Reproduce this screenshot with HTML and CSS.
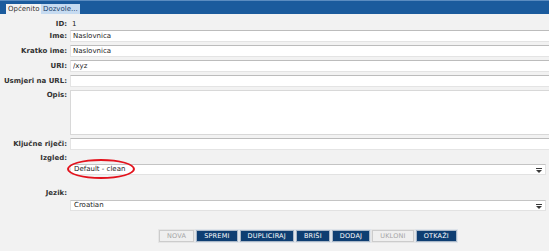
FILE: index.html
```html
<!DOCTYPE html>
<html lang="hr">
<head>
    <meta charset="UTF-8">
    <title>Stranica</title>
    <link rel="stylesheet" href="styles.css">
</head>
<body>
    <div class="tabbar">
        <div class="tab active">Općenito</div>
        <div class="tab">Dozvole...</div>
    </div>

    <div class="form">
        <div class="row row-id">
            <label>ID:</label>
            <span class="value">1</span>
        </div>
        <div class="row">
            <label>Ime:</label>
            <input type="text" value="Naslovnica">
        </div>
        <div class="row">
            <label>Kratko ime:</label>
            <input type="text" value="Naslovnica">
        </div>
        <div class="row">
            <label>URI:</label>
            <input type="text" value="/xyz">
        </div>
        <div class="row">
            <label>Usmjeri na URL:</label>
            <input type="text" value="">
        </div>
        <div class="row row-opis">
            <label>Opis:</label>
            <textarea></textarea>
        </div>
        <div class="row">
            <label>Ključne riječi:</label>
            <input type="text" value="">
        </div>

        <div class="row row-head">
            <label>Izgled:</label>
        </div>
        <div class="row row-select">
            <span></span>
            <div class="select marked">
                <span>Default - clean</span>
                <svg class="arrow" width="6" height="5" viewBox="0 0 6 5"><rect x="0" y="0" width="6" height="1" fill="#3a3a3a"/><path d="M0 2h6L3 5z" fill="#3a3a3a"/></svg>
                <div class="ring"></div>
            </div>
        </div>

        <div class="row row-head row-jezik">
            <label>Jezik:</label>
        </div>
        <div class="row row-select">
            <span></span>
            <div class="select">
                <span>Croatian</span>
                <svg class="arrow" width="6" height="5" viewBox="0 0 6 5"><rect x="0" y="0" width="6" height="1" fill="#3a3a3a"/><path d="M0 2h6L3 5z" fill="#3a3a3a"/></svg>
            </div>
        </div>

        <div class="row row-buttons">
            <span></span>
            <div class="buttons">
                <button class="btn" disabled>NOVA</button>
                <button class="btn">SPREMI</button>
                <button class="btn">DUPLICIRAJ</button>
                <button class="btn">BRIŠI</button>
                <button class="btn">DODAJ</button>
                <button class="btn" disabled>UKLONI</button>
                <button class="btn">OTKAŽI</button>
            </div>
        </div>
    </div>
</body>
</html>
```

FILE: styles.css
```css
* {
    margin: 0;
    padding: 0;
    box-sizing: border-box;
    font-family: 'DejaVu Sans', Verdana, sans-serif;
}

body {
    background: #f2f2f2;
    color: #222;
    font-size: 7px;
    overflow: hidden;
}

.tabbar {
    background: #1b5b9d;
    border-top: 1px solid #5b8cc0;
    height: 14px;
    padding: 3px 0 0 6px;
    display: flex;
}

.tab {
    height: 10px;
    line-height: 10px;
    padding: 0 2px;
    width: 35px;
    color: #333;
    background: #f2f2f2;
}

.tab + .tab {
    width: 39px;
    background: #c6dbf1;
    color: #1d3f6a;
}

.form {
    padding-top: 5px;
}

.row {
    display: grid;
    grid-template-columns: 67px 1fr;
    column-gap: 3px;
    margin-bottom: 3px;
}

.row label {
    text-align: right;
    font-weight: bold;
    color: #333;
    line-height: 12px;
}

.row-id {
    height: 10px;
    margin-bottom: 1px;
}

.row-id label, .row-id .value {
    line-height: 10px;
}

.value {
    padding-left: 2px;
}

input[type="text"], textarea {
    width: calc(100% + 10px);
    height: 12px;
    border: 1px solid #e4e4e4;
    border-top-color: #bcbcbc;
    background: #fff;
    font-size: 7px;
    padding: 0 2px;
    color: #222;
    outline: none;
}

.row-opis label {
    line-height: 10px;
}

textarea {
    height: 45px;
    resize: none;
    border-color: #d8d8d8;
}

.row-head {
    margin-bottom: 1px;
}

.row-head label {
    line-height: 10px;
}

.row-jezik {
    margin-top: 13px;
    margin-bottom: 2px;
}

.select {
    position: relative;
    width: 476px;
    height: 11px;
    background: #fff;
    border: 1px solid #e2e2e2;
    border-top-color: #c4c4c4;
    padding: 0 3px;
    line-height: 9px;
    color: #222;
}

.arrow {
    position: absolute;
    right: 3px;
    top: 3px;
}

.ring {
    position: absolute;
    left: -4px;
    top: -6px;
    width: 68px;
    height: 20px;
    border: 2px solid #e3121c;
    border-radius: 50%;
}

.row-buttons {
    margin-top: 19px;
}

.buttons {
    width: 476px;
    display: flex;
    justify-content: center;
    gap: 2px;
}

.btn {
    height: 12px;
    padding: 0 7px;
    font-size: 6.5px;
    line-height: 10px;
    color: #fff;
    background: #0e3e72;
    border: 1px solid #a9b7c7;
    outline: 1px solid #dfe4ea;
    letter-spacing: 0.2px;
}

.btn:disabled {
    background: #efefef;
    color: #a5a5a5;
    border-color: #cccccc;
    outline-color: #e6e6e6;
}
```
